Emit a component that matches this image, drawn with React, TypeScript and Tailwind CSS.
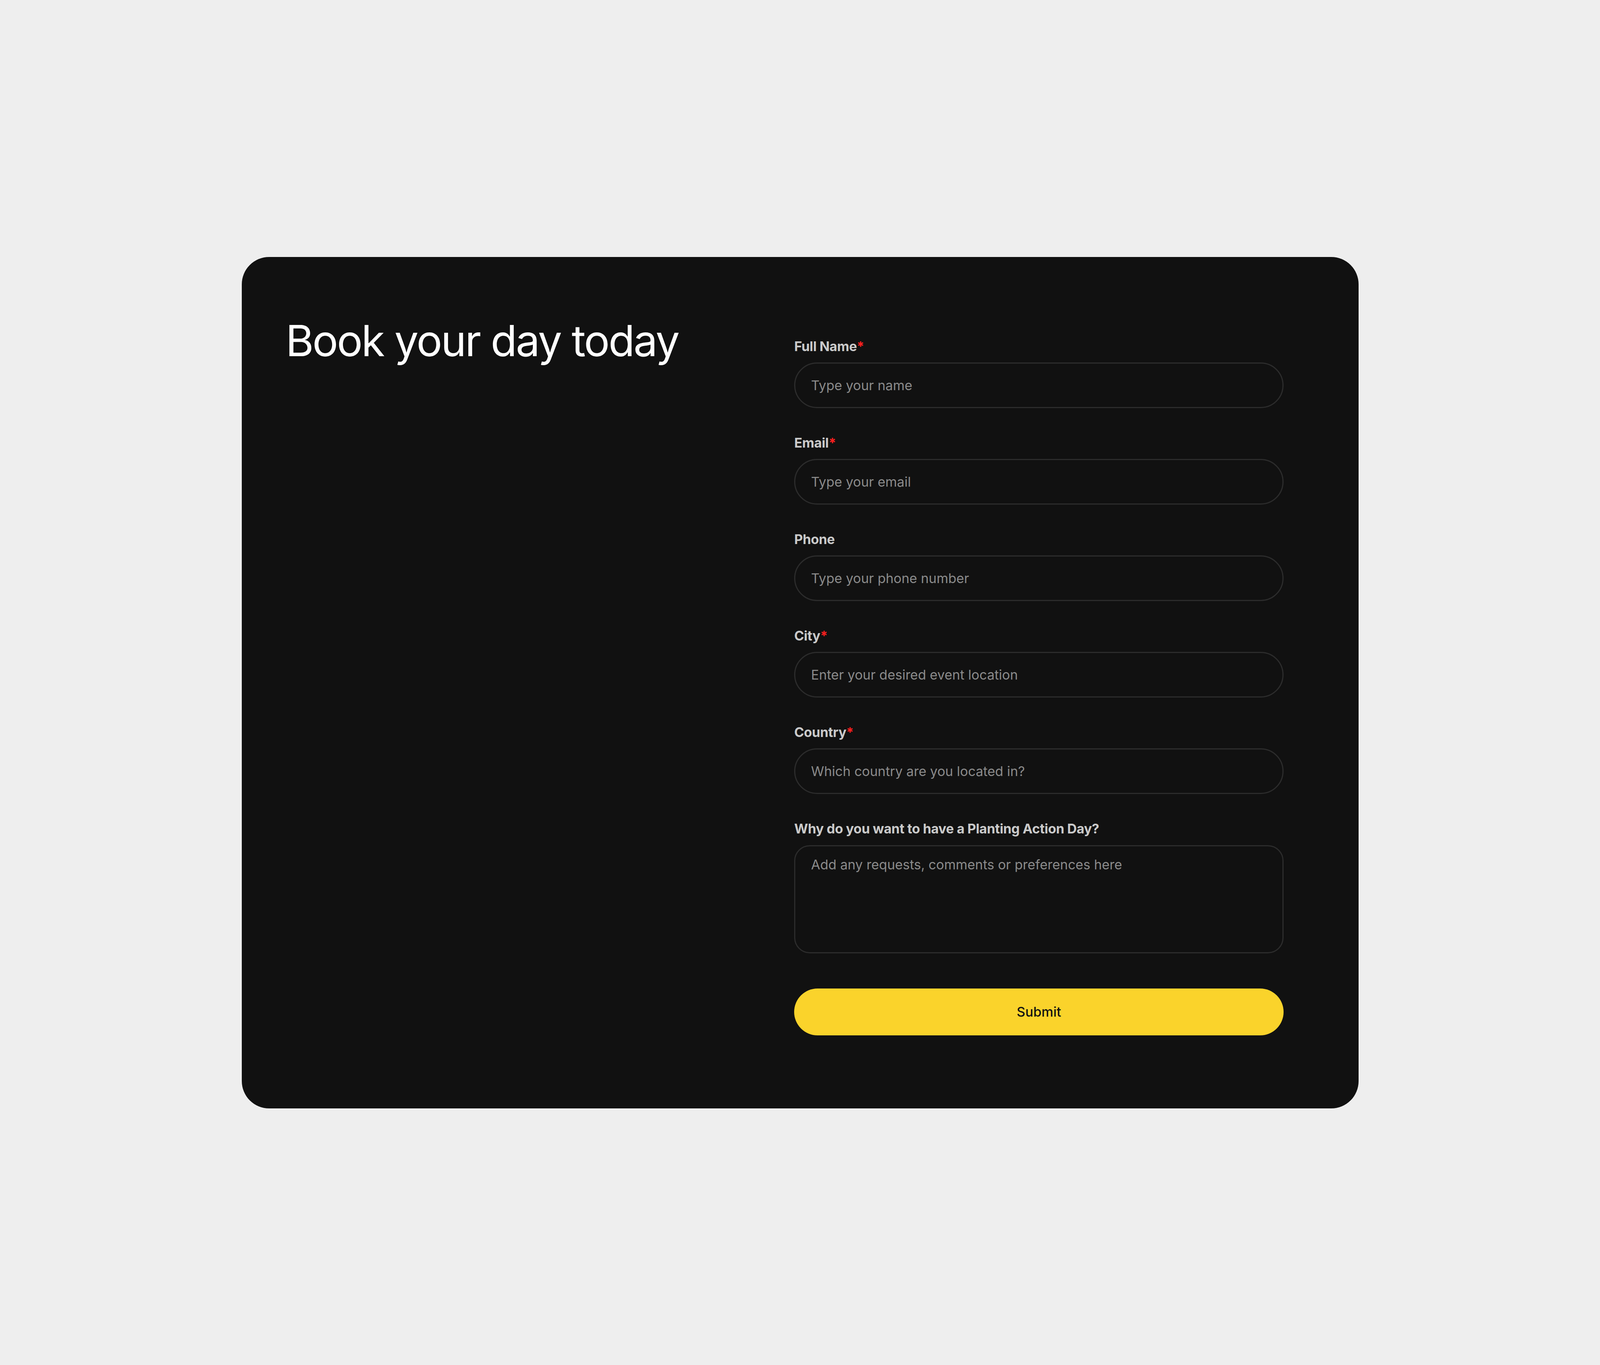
import React from 'react';

interface Field {
  label: string;
  placeholder: string;
  required?: boolean;
  type?: string;
}

const fields: Field[] = [
  { label: 'Full Name', placeholder: 'Type your name', required: true },
  { label: 'Email', placeholder: 'Type your email', required: true, type: 'email' },
  { label: 'Phone', placeholder: 'Type your phone number', type: 'tel' },
  { label: 'City', placeholder: 'Enter your desired event location', required: true },
  { label: 'Country', placeholder: 'Which country are you located in?', required: true },
];

function FieldLabel({ text, required }: { text: string; required?: boolean }) {
  return (
    <label className="block text-[34px] leading-[42px] font-bold text-[#cacaca] tracking-[-0.01em]">
      {text}
      {required && <span className="text-[#ff1f1f]">*</span>}
    </label>
  );
}

export default function App() {
  return (
    <div className="min-h-screen bg-[#eeeeee] flex items-center justify-center font-['Inter','Liberation_Sans',sans-serif]">
      <div className="w-[69.8vw] bg-[#111111] rounded-[70px] flex pl-[2.75vw] pr-[4.67vw] pt-[159px] pb-[187px]">
        <div className="flex-1">
          <h1 className="text-[110px] leading-[110px] font-normal text-white tracking-[-0.03em] whitespace-nowrap">
            Book your day today
          </h1>
        </div>

        <form
          className="w-[30.59vw] pt-[49px] flex flex-col"
          onSubmit={(e) => e.preventDefault()}
        >
          {fields.map((f) => (
            <div key={f.label} className="flex flex-col gap-[20px] mb-[68px]">
              <FieldLabel text={f.label} required={f.required} />
              <input
                type={f.type ?? 'text'}
                placeholder={f.placeholder}
                className="h-[117px] w-full rounded-full border-[3px] border-[#2c2c2c] bg-transparent px-[40px] text-[34px] text-white placeholder:text-[#8a8a8a] outline-none"
              />
            </div>
          ))}

          <div className="flex flex-col gap-[21px]">
            <FieldLabel text="Why do you want to have a Planting Action Day?" />
            <textarea
              placeholder="Add any requests, comments or preferences here"
              className="h-[277px] w-full resize-none rounded-[40px] border-[3px] border-[#2c2c2c] bg-transparent px-[40px] pt-[21px] text-[34px] leading-[51px] text-white placeholder:text-[#8a8a8a] outline-none"
            />
          </div>

          <button
            type="submit"
            className="mt-[90px] h-[120px] w-full rounded-full bg-[#fad32b] text-[34px] font-medium text-[#111111]"
          >
            Submit
          </button>
        </form>
      </div>
    </div>
  );
}
